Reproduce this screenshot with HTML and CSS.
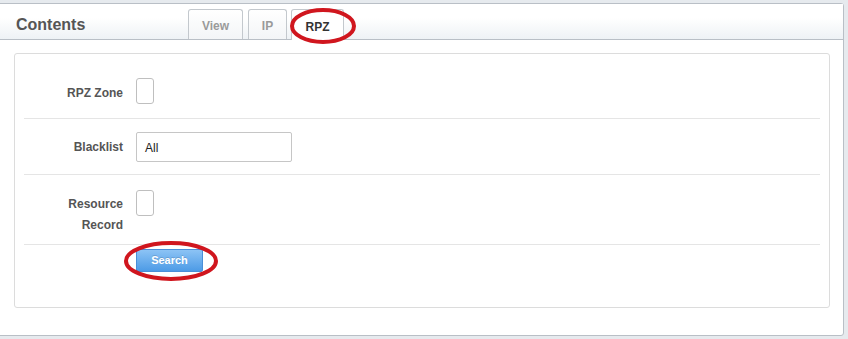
FILE: index.html
```html
<!DOCTYPE html>
<html>
<head>
<meta charset="utf-8">
<link rel="stylesheet" href="styles.css">
</head>
<body>
<div class="panel">
  <div class="panel-head">
    <div class="title">Contents</div>
    <div class="tabs">
      <div class="tab tab-view">View</div>
      <div class="tab tab-ip">IP</div>
      <div class="tab tab-rpz active">RPZ
        <svg class="mark mark-tab" width="70" height="40" viewBox="0 0 70 40"><ellipse cx="35" cy="20" rx="31" ry="16" fill="none" stroke="#d0161e" stroke-width="4"/></svg>
      </div>
    </div>
  </div>
  <div class="panel-body">
    <div class="form">
      <div class="row row-1">
        <div class="label">RPZ Zone</div>
        <div class="field"><div class="box"></div></div>
      </div>
      <div class="row row-2">
        <div class="label">Blacklist</div>
        <div class="field"><div class="input">All</div></div>
      </div>
      <div class="row row-3">
        <div class="label">Resource<br>Record</div>
        <div class="field"><div class="box"></div></div>
      </div>
      <div class="actions">
        <div class="btn">Search
          <svg class="mark mark-btn" width="98" height="44" viewBox="0 0 98 44"><ellipse cx="49" cy="22" rx="45" ry="18" fill="none" stroke="#d0161e" stroke-width="4"/></svg>
        </div>
      </div>
    </div>
  </div>
</div>
</body>
</html>
```
FILE: styles.css
```css
html, body {
  margin: 0;
  padding: 0;
  background: #e6eaee;
  font-family: "Liberation Sans", Arial, sans-serif;
}
body {
  width: 848px;
  height: 339px;
  overflow: hidden;
}
.panel {
  margin: 3px 4px 0 -1px;
  height: 333px;
  background: #fff;
  border: 1px solid #b9bfc6;
  border-radius: 0 3px 3px 0;
  box-sizing: border-box;
}
.panel-head {
  height: 35px;
  border-bottom: 1px solid #b9bfc6;
  background: linear-gradient(#ffffff 0%, #ffffff 40%, #eef2f5 100%);
  display: flex;
  align-items: flex-end;
  position: relative;
}
.title {
  position: absolute;
  left: 16px;
  top: 12px;
  font-size: 16px;
  font-weight: bold;
  color: #555;
}
.tabs {
  display: flex;
  margin-left: 188px;
  gap: 5px;
  margin-bottom: -1px;
}
.tab {
  height: 30px;
  box-sizing: border-box;
  border: 1px solid #c3c8cd;
  border-bottom: none;
  border-radius: 3px 3px 0 0;
  background: linear-gradient(#ffffff, #f3f5f7);
  font-size: 12px;
  font-weight: bold;
  color: #9a9a9a;
  display: flex;
  align-items: center;
  justify-content: center;
  padding-top: 3px;
}
.tab-view { width: 55px; }
.tab-ip { width: 39px; }
.tab-rpz { width: 53px; margin-left: -1px; }
.tab.active {
  background: #fff;
  color: #333;
  height: 31px;
  position: relative;
}
.mark {
  position: absolute;
  pointer-events: none;
}
.mark-tab {
  left: -4px;
  top: -4px;
}
.panel-body {
  padding: 13px 13px 0 14px;
}
.form {
  height: 255px;
  border: 1px solid #dcdcdc;
  border-radius: 3px;
  box-sizing: border-box;
  padding: 0 9px;
}
.row {
  display: flex;
  align-items: flex-start;
  border-bottom: 1px solid #e5e5e5;
}
.label {
  width: 99px;
  text-align: right;
  font-size: 12px;
  font-weight: bold;
  color: #555;
  line-height: 21px;
}
.field {
  margin-left: 13px;
}
.row-1 { height: 64px; }
.row-2 { height: 55px; }
.row-3 { height: 69px; }
.row-1 .label { margin-top: 29px; }
.row-1 .field { margin-top: 24px; }
.row-2 .label { margin-top: 18px; }
.row-2 .field { margin-top: 13px; }
.row-3 .label { margin-top: 19px; }
.row-3 .field { margin-top: 15px; }
.box {
  width: 18px;
  height: 26px;
  box-sizing: border-box;
  border: 1px solid #bfbfbf;
  border-radius: 3px;
  background: #fff;
}
.input {
  width: 156px;
  height: 30px;
  box-sizing: border-box;
  border: 1px solid #c6c6c6;
  border-radius: 2px;
  font-size: 12px;
  color: #222;
  padding: 8px 0 0 8px;
}
.actions {
  padding: 4px 0 0 112px;
}
.btn {
  position: relative;
  width: 67px;
  height: 23px;
  box-sizing: border-box;
  border: 1px solid #4a8fd8;
  border-radius: 2px;
  background: linear-gradient(#8cc3f5, #4d9be6);
  color: #fff;
  font-size: 11px;
  font-weight: bold;
  text-align: center;
  line-height: 21px;
  text-shadow: 0 -1px 0 rgba(0,0,0,0.15);
}
.mark-btn {
  left: -15px;
  top: -11px;
}
```
